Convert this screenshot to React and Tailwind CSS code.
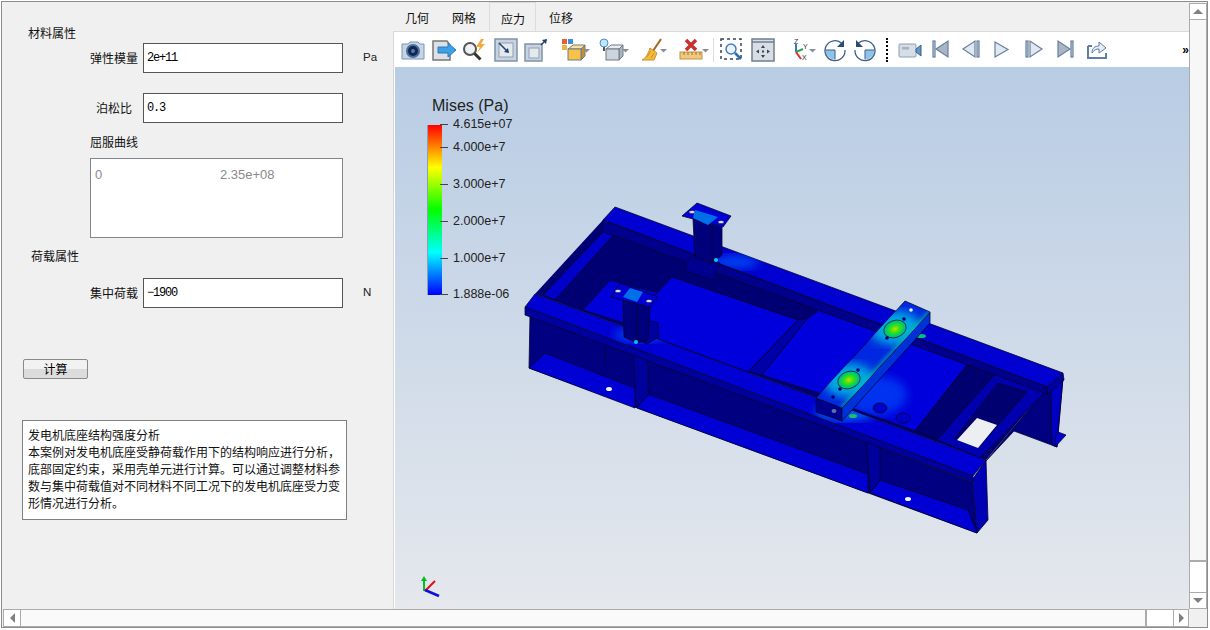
const cjk = "font-['Noto_Sans_CJK_SC','Liberation_Sans',sans-serif]";

function Svg({ w = 24, className = "", children }) {
  return (
    <svg width={w} height="24" viewBox={`0 0 ${w} 24`} className={"shrink-0 " + className}>
      {children}
    </svg>
  );
}

const Caret = ({ x }) => <path d={`M${x} 11h7l-3.500 3.500z`} fill="#8a8f96" />;

const Cube = ({ top, side, front }) => (
  <g stroke="#6f7a86" strokeWidth="1">
    <path d="M7 11h13l4-4H12z" fill={top} />
    <path d="M20 11l4-4v11l-4 4z" fill={side} />
    <rect x="7" y="11" width="13" height="11" fill={front} />
  </g>
);

const BoxFrame = () => (
  <g>
    <rect x="1" y="1" width="22" height="22" fill="#c9d3de" stroke="#7f93ab" strokeWidth="1.500" />
    <rect x="5" y="5" width="14" height="14" fill="#e4e9ee" stroke="#8ea0b5" />
  </g>
);

const Camera = (p) => (
  <Svg {...p}>
    <path d="M1 6h6l2-2h8l2 2h4v15H1z" fill="#c6d4e4" stroke="#7b94b3" />
    <circle cx="12" cy="13" r="7" fill="#4a6f9c" />
    <circle cx="12" cy="13" r="5" fill="#14274a" />
    <circle cx="12" cy="13" r="2" fill="#4f7cc0" />
  </Svg>
);

const Export = (p) => (
  <Svg {...p}>
    <path d="M1 3h14l3 4v15H1z" fill="#dde1e6" stroke="#777" strokeWidth="1.500" />
    <path d="M6 9h10V5l8 7-8 7v-4H6z" fill="#3ea0e6" stroke="#2a78b8" />
  </Svg>
);

const Bolt = (p) => (
  <Svg {...p}>
    <circle cx="8" cy="11" r="6" fill="#eef2f6" stroke="#555" strokeWidth="2" />
    <path d="M12.500 15.500l6 6" stroke="#333" strokeWidth="3" />
    <path d="M19 1l-5 8h4l-3 6 8-9h-4l3-5z" fill="#f2a93b" />
  </Svg>
);

const BoxIn = (p) => (
  <Svg {...p}>
    <BoxFrame />
    <path d="M5 5l9 9" stroke="#1f3f6e" strokeWidth="1.500" />
    <path d="M15 15l-5-1 4-4z" fill="#1f3f6e" />
  </Svg>
);

const BoxOut = (p) => (
  <Svg {...p}>
    <rect x="1" y="6" width="17" height="17" fill="#c9d3de" stroke="#7f93ab" strokeWidth="1.500" />
    <rect x="5" y="10" width="10" height="10" fill="#e4e9ee" stroke="#8ea0b5" />
    <path d="M17 7l5-5" stroke="#1f3f6e" strokeWidth="1.500" />
    <path d="M23 1l-1 5-4-4z" fill="#1f3f6e" />
  </Svg>
);

const ColorCube = (p) => (
  <Svg w={30} {...p}>
    <rect x="1" y="1" width="5" height="5" fill="#e2603c" />
    <rect x="7" y="1" width="5" height="5" fill="#3f8ed8" />
    <rect x="1" y="7" width="5" height="5" fill="#f0b040" />
    <Cube top="#f7e2a0" side="#c98f2c" front="#f6c24a" />
    <Caret x={22} />
  </Svg>
);

const BulbCube = (p) => (
  <Svg w={30} {...p}>
    <Cube top="#e8edf2" side="#aab4bf" front="#ccd4dc" />
    <circle cx="5" cy="5" r="4" fill="#bfe6fa" stroke="#4b8fc4" />
    <path d="M4 9h2v4H4z" fill="#555" />
    <Caret x={23} />
  </Svg>
);

const Broom = (p) => (
  <Svg w={28} {...p}>
    <path d="M20 1l-8 12" stroke="#a5641e" strokeWidth="2" />
    <path d="M9 10l7 5-3 7-12 0c4-2 6-6 8-12z" fill="#f4bc3c" stroke="#c98f2c" />
    <path d="M6 19l4-6M10 20l3-5" stroke="#c98f2c" />
    <Caret x={19} />
  </Svg>
);

const Ruler = (p) => (
  <Svg w={30} {...p}>
    <path d="M7 2l10 10M17 2L7 12" stroke="#c8312f" strokeWidth="3.500" />
    <rect x="1" y="14" width="22" height="7" fill="#f0c980" stroke="#bf9444" />
    <path d="M5 14v3M9 14v3M13 14v3M17 14v3M21 14v3" stroke="#9a7430" />
    <Caret x={23} />
  </Svg>
);

const DashZoom = (p) => (
  <Svg {...p}>
    <rect x="1" y="1" width="20" height="20" fill="none" stroke="#33415c" strokeWidth="1.500" strokeDasharray="3 3" />
    <circle cx="11" cy="11" r="5" fill="#eef3f8" stroke="#3f7fbe" strokeWidth="1.500" />
    <path d="M15 15l6 6" stroke="#2e6fb0" strokeWidth="2.500" />
  </Svg>
);

const Fit = (p) => (
  <Svg {...p}>
    <rect x="1" y="1" width="22" height="22" fill="#d9dee5" stroke="#6f7f94" strokeWidth="1.500" />
    <path d="M1 4h22" stroke="#6f7f94" strokeWidth="1.500" />
    <g fill="#3a4454">
      <path d="M12 7l2 3h-4zM12 20l2-3h-4zM5 13.500l3-2v4zM19 13.500l-3-2v4z" />
      <rect x="11" y="12.500" width="2" height="2" />
    </g>
  </Svg>
);

const Axes = (p) => (
  <Svg w={26} {...p}>
    <path d="M6 14V6" stroke="#3a78c4" strokeWidth="2" />
    <path d="M6 14l7-3" stroke="#2fa84f" strokeWidth="2" />
    <path d="M6 14l5 7" stroke="#d8322f" strokeWidth="2" />
    <text x="4" y="6" fontSize="7" fontFamily="Liberation Sans" fill="#333">Z</text>
    <text x="13" y="11" fontSize="7" fontFamily="Liberation Sans" fill="#333">Y</text>
    <text x="12" y="22" fontSize="7" fontFamily="Liberation Sans" fill="#333">X</text>
    <Caret x={19} />
  </Svg>
);

const Rotate = ({ flip, ...p }) => (
  <Svg {...p}>
    <g transform={flip ? "translate(24 0) scale(-1 1)" : undefined}>
      <path d="M12 12H2.500a9.500 9.500 0 0 0 9.500 9.500z" fill="#8cc4ea" />
      <path d="M12 12v9.500M12 12H2.500" stroke="#3d5f88" />
      <path d="M19 5.500A10 10 0 1 0 22 12" fill="none" stroke="#3d5f88" strokeWidth="1.300" />
      <path d="M21 2v7h-7z" fill="#2c4a72" />
    </g>
  </Svg>
);

const Video = (p) => (
  <Svg {...p}>
    <rect x="1" y="6" width="17" height="13" rx="1" fill="#d5dde6" stroke="#8ea0b5" />
    <rect x="4" y="9" width="7" height="2.500" fill="#a8b2bd" />
    <path d="M18 11l5-4v11l-5-4z" fill="#5f98c8" stroke="#3d5f88" />
  </Svg>
);

const tri = { fill: "#c9d4e0", stroke: "#667f9f", strokeWidth: 1.2 };
const First = (p) => (
  <Svg w={20} {...p}>
    <rect x="2" y="3" width="2" height="16" {...tri} />
    <path d="M17 3v16L5 11z" {...tri} fill="#a9b5c2" />
  </Svg>
);
const Prev = (p) => (
  <Svg w={20} {...p}>
    <path d="M14 3v16L2 11z" {...tri} fill="#e1e8f0" />
    <rect x="16" y="3" width="2" height="16" {...tri} />
  </Svg>
);
const Play = (p) => (
  <Svg w={20} {...p}>
    <path d="M3 4v15l13-7.500z" {...tri} fill="#e1e8f0" />
  </Svg>
);
const Next = (p) => (
  <Svg w={20} {...p}>
    <rect x="2" y="3" width="2" height="16" {...tri} />
    <path d="M6 3v16l12-8z" {...tri} fill="#e1e8f0" />
  </Svg>
);
const Last = (p) => (
  <Svg w={20} {...p}>
    <path d="M3 3v16l12-8z" {...tri} fill="#a9b5c2" />
    <rect x="16" y="3" width="2" height="16" {...tri} />
  </Svg>
);
const Share = (p) => (
  <Svg {...p}>
    <path d="M3 8h4M3 8v12h18v-5" fill="none" stroke="#5d7fa8" strokeWidth="2" />
    <path d="M7 15c0-5 3-7 7-7V4l7 6-7 5v-4c-3 0-5 1-7 4z" fill="#e6edf5" stroke="#5d7fa8" />
  </Svg>
);

function Toolbar() {
  return (
    <div className="h-[35px] shrink-0 bg-white flex items-center overflow-hidden pl-[6px]">
      <Camera />
      <Export className="ml-[7px]" />
      <Bolt className="ml-[6px]" />
      <BoxIn className="ml-[8px]" />
      <BoxOut className="ml-[6px]" />
      <ColorCube className="ml-[13px]" />
      <BulbCube className="ml-[8px]" />
      <Broom className="ml-[12px]" />
      <Ruler className="ml-[10px]" />
      <div className="ml-[4px] w-px h-[24px] bg-[#dcdcdc]" />
      <DashZoom className="ml-[6px]" />
      <Fit className="ml-[7px]" />
      <Axes className="ml-[15px]" />
      <Rotate className="ml-[7px]" />
      <Rotate flip className="ml-[6px]" />
      <div className="ml-[9px] w-[3px] h-[24px] border-l-[2px] border-dotted border-black" />
      <Video className="ml-[9px]" />
      <First className="ml-[9px]" />
      <Prev className="ml-[10px]" />
      <Play className="ml-[11px]" />
      <Next className="ml-[12px]" />
      <Last className="ml-[11px]" />
      <Share className="ml-[10px]" />
      <span className="ml-auto text-[12px] leading-none font-bold text-black font-['Liberation_Sans',sans-serif]">»</span>
    </div>
  );
}

function Legend() {
  const labels = ["4.615e+07", "4.000e+7", "3.000e+7", "2.000e+7", "1.000e+7", "1.888e-06"];
  const spacing = ["mt-0", "mt-[8px]", "mt-[22px]", "mt-[22px]", "mt-[22px]", "mt-[21px]"];
  return (
    <div className="absolute left-[32px] top-[30px] text-[#222] font-['Liberation_Sans',sans-serif]">
      <div className="pl-[5px] text-[16px] leading-[18px]">Mises (Pa)</div>
      <div className="mt-[10px] flex">
        <div className="w-[15px] h-[170px] bg-[linear-gradient(to_bottom,#ff0000,#ffff00_25%,#00ff00_50%,#00ffff_75%,#0000ff)] border-l border-[#8aa0b8]" />
        <div className="-mt-[8px] flex flex-col">
          {labels.map((t, i) => (
            <div key={t} className={"flex items-center h-[15px] " + spacing[i]}>
              <span className="w-[8px] h-px bg-[#444] -ml-[2px]" />
              <span className="ml-[5px] text-[12.5px] leading-[15px]">{t}</span>
            </div>
          ))}
        </div>
      </div>
    </div>
  );
}

function Model() {
  const line = { stroke: "#050530", strokeWidth: 0.8, strokeLinejoin: "round" };
  return (
    <svg className="absolute inset-0 w-full h-full" viewBox="395 67 794 542">
      <defs>
        <filter id="b2"><feGaussianBlur stdDeviation="2" /></filter>
        <filter id="b5"><feGaussianBlur stdDeviation="5" /></filter>
        <filter id="b1"><feGaussianBlur stdDeviation="0.7" /></filter>
        <radialGradient id="hot">
          <stop offset="0" stopColor="#b8e400" />
          <stop offset="0.4" stopColor="#40e010" />
          <stop offset="0.75" stopColor="#00d060" />
          <stop offset="1" stopColor="#00b0a0" />
        </radialGradient>
        <clipPath id="beamTop"><path d="M905 301l25 11-88 96-26-10z" /></clipPath>
        <clipPath id="railTop"><path d="M535 294L986 460 973 476 525 307z" /></clipPath>
        <clipPath id="farTop"><path d="M603 220l12-13 448 166-16 14z" /></clipPath>
        <clipPath id="plateR"><path d="M905 337l65 24-55 70-65-24z" /></clipPath>
      </defs>

      {/* far end web */}
      <path d="M1047 387l16-9-6 69-43-16-29 31z" fill="#000080" {...line} />
      <path d="M1051 390l12-12-5 54-1 15-5-2z" fill="#0000c4" {...line} />
      <path d="M1055 447l11-12-8-3-3 6z" fill="#0000d0" {...line} />

      {/* interior */}
      <path d="M603 220L1047 387 986 460 535 294z" fill="#000072" />
      <path d="M603 232l14-1-62 69-12-5z" fill="#0000c8" {...line} />
      <path d="M583 310l27-30 48 13-28 32z" fill="#0000d8" {...line} />
      <path d="M672 277l126 43-50 52-123-45z" fill="#0000dc" {...line} />
      <path d="M798 320l10-2-46 57-14-3z" fill="#0000a8" {...line} />
      <path d="M808 318l15-11 62 23-60 65-63-20z" fill="#0000dc" {...line} />
      <path d="M905 337l65 24-55 70-65-24z" fill="#0000dc" {...line} />
      <g clipPath="url(#plateR)">
        <ellipse cx="875" cy="395" rx="32" ry="20" fill="#0030f0" filter="url(#b5)" />
      </g>
      <ellipse cx="880" cy="408" rx="7" ry="5" fill="#0000c8" {...line} />
      <ellipse cx="903" cy="418" rx="7" ry="5" fill="#0000c8" {...line} />
      <path d="M970 361l27 11-57 68-25-9z" fill="#000070" {...line} />
      <path d="M997 372l50 18-67 68-43-18z" fill="#0000b0" {...line} />
      <path d="M998 383l29 9-49 56-23-10z" fill="#000070" {...line} />
      <path d="M977 418l20 7-19 23-21-8z" fill="#eceef1" />

      {/* far rail */}
      <path d="M603 220l12-13 448 166-16 14z" fill="#0000d0" {...line} />
      <g clipPath="url(#farTop)">
        <ellipse cx="735" cy="262" rx="24" ry="7" fill="#0040f0" filter="url(#b5)" />
      </g>
      <path d="M603 220v12l12 4 432 158v-7z" fill="#00008c" {...line} />
      <path d="M1047 387l16-14 1 7-16 14z" fill="#0000a0" {...line} />

      {/* far stand */}
      <path d="M693 255l27 8-7 17-27-9v-9z" fill="#000090" {...line} />
      <path d="M693 219l29 8v28l-10 8-17-5z" fill="#00007c" {...line} />
      <path d="M712 225v38" {...line} />
      <path d="M697 203l34 13-8 11-41-11z" fill="#0000d4" {...line} />
      <path d="M695 210l23 7-10 8-15-7z" fill="#0070e8" filter="url(#b1)" />
      <ellipse cx="692" cy="212" rx="3" ry="1.500" fill="#e0e6ee" stroke="#000050" strokeWidth="0.5" />
      <ellipse cx="721" cy="222" rx="3" ry="1.500" fill="#e0e6ee" stroke="#000050" strokeWidth="0.5" />
      <circle cx="716" cy="260" r="2" fill="#00c8f0" filter="url(#b1)" />

      {/* near rail */}
      <path d="M530 315L972 482 977 533 529 368z" fill="#000080" {...line} />
      <path d="M972 480l14-20 2 60-11 13z" fill="#0000b4" {...line} />
      <path d="M529 368l16-15 90 35v20z" fill="#0000d4" {...line} />
      <path d="M648 394l220 80v19l-231-85z" fill="#0000d4" {...line} />
      <path d="M880 480l88 30 9 23-107-40z" fill="#0000d4" {...line} />
      <path d="M633 346l3 62 12-13v-46z" fill="#00009c" {...line} />
      <path d="M866 432l4 61 10-13v-44z" fill="#00009c" {...line} />
      <path d="M605 335v30M605 335l30 11" {...line} />
      <ellipse cx="609" cy="389" rx="3" ry="2" fill="#f0f2f4" />
      <ellipse cx="908" cy="499" rx="3" ry="2" fill="#f0f2f4" />
      <path d="M535 294L986 460 973 476 525 307z" fill="#0000d4" {...line} />
      <g clipPath="url(#railTop)">
        <ellipse cx="640" cy="335" rx="26" ry="7" fill="#0040f0" filter="url(#b5)" />
        <ellipse cx="845" cy="412" rx="30" ry="9" fill="#0060f0" filter="url(#b5)" />
      </g>
      <path d="M525 307l448 169v6L525 315z" fill="#0000a0" {...line} />

      {/* near stand */}
      <path d="M640 318l18 5 1 14-12 7-10-4z" fill="#0000a0" {...line} />
      <path d="M623 300l27 7-2 33-11 3-13-6z" fill="#00007c" {...line} />
      <path d="M637 305v38" {...line} />
      <path d="M620 283l38 14-8 10-39-10z" fill="#0000d4" {...line} />
      <path d="M630 288l13 4-6 10-14-5z" fill="#0070e8" filter="url(#b1)" />
      <ellipse cx="618" cy="291" rx="3" ry="1.500" fill="#e0e6ee" stroke="#000050" strokeWidth="0.5" />
      <ellipse cx="649" cy="301" rx="3" ry="1.500" fill="#e0e6ee" stroke="#000050" strokeWidth="0.5" />
      <circle cx="636" cy="342" r="2" fill="#00c8f0" filter="url(#b1)" />

      {/* cross beam */}
      <ellipse cx="921" cy="336" rx="5" ry="2" fill="#00c080" filter="url(#b1)" />
      <ellipse cx="853" cy="416" rx="4" ry="2" fill="#20c060" filter="url(#b1)" />
      <path d="M816 398l26 10v13l-26-9z" fill="#000090" {...line} />
      <path d="M930 312v11l-78 87-10 11v-13z" fill="#0030d8" {...line} />
      <path d="M905 301l25 11-88 96-26-10z" fill="#0028e0" {...line} />
      <g clipPath="url(#beamTop)">
        <ellipse cx="895" cy="328" rx="26" ry="17" fill="#00a8e0" filter="url(#b5)" />
        <ellipse cx="849" cy="380" rx="26" ry="17" fill="#00a8e0" filter="url(#b5)" />
        <path d="M930 312l-88 96" stroke="#00c8a0" strokeWidth="3" filter="url(#b2)" />
      </g>
      <ellipse cx="895" cy="329" rx="11.500" ry="8.500" fill="url(#hot)" stroke="#053030" strokeWidth="0.8" transform="rotate(-20 895 329)" />
      <ellipse cx="849" cy="380" rx="11.500" ry="8.500" fill="url(#hot)" stroke="#053030" strokeWidth="0.8" transform="rotate(-20 849 380)" />
      <circle cx="911" cy="310" r="1.800" fill="#e8eef2" />
      <circle cx="904" cy="319" r="1.800" fill="#000070" />
      <circle cx="887" cy="338" r="1.800" fill="#000070" />
      <circle cx="858" cy="370" r="1.800" fill="#000070" />
      <circle cx="840" cy="389" r="1.800" fill="#000070" />
      <circle cx="833" cy="397" r="1.800" fill="#000070" />
      <ellipse cx="834" cy="411" rx="2.500" ry="2" fill="#6070a0" />

      {/* axes */}
      <g filter="url(#b1)">
        <path d="M424 591v-13" stroke="#00c020" strokeWidth="2" />
        <path d="M424 576l-3 5h6z" fill="#00c020" />
        <path d="M425 591l10-10" stroke="#e01010" strokeWidth="2" />
        <path d="M425 590l14 6" stroke="#1010e0" strokeWidth="2.500" />
      </g>
    </svg>
  );
}

function Field({ label, value, unit }) {
  return (
    <div className="flex items-center h-[30px] pl-[88px]">
      <span className="w-[48px] text-center text-[12px] leading-[16px] text-[#111]">{label}</span>
      <div className="ml-[5px] w-[200px] h-full bg-white border border-[#555] pl-[3px] flex items-center text-[12px] tracking-[-1.2px] text-black font-['Liberation_Mono',monospace]">
        {value}
      </div>
      {unit && <span className="ml-[20px] text-[11.5px] text-[#222] font-['Liberation_Sans',sans-serif]">{unit}</span>}
    </div>
  );
}

function LeftPanel() {
  return (
    <div className={"w-[391px] shrink-0 flex flex-col pt-[23px] " + cjk}>
      <div className="pl-[26px] text-[12px] leading-[16px] text-[#111]">材料属性</div>
      <div className="mt-[2px]">
        <Field label="弹性模量" value="2e+11" unit="Pa" />
      </div>
      <div className="mt-[20px]">
        <Field label="泊松比" value="0.3" />
      </div>
      <div className="mt-[11px] pl-[88px] text-[12px] leading-[16px] text-[#111]">屈服曲线</div>
      <div className="mt-[8px] ml-[88px] w-[253px] h-[80px] bg-white border border-[#80868c] flex pt-[8px] pl-[4px] text-[13px] leading-[15px] text-[#8a8a8a] font-['Liberation_Sans',sans-serif]">
        <span className="w-[125px]">0</span>
        <span>2.35e+08</span>
      </div>
      <div className="mt-[10px] pl-[29px] text-[12px] leading-[16px] text-[#111]">荷载属性</div>
      <div className="mt-[14px]">
        <Field label="集中荷载" value="−1900" unit="N" />
      </div>
      <button
        type="button"
        className="mt-[51px] ml-[21px] w-[65px] h-[20px] rounded-[2px] border border-[#8a8a8a] bg-[linear-gradient(to_bottom,#f2f2f2_50%,#dcdcdc_50%)] text-[12px] leading-[16px] text-black"
      >
        计算
      </button>
      <div className="mt-[41px] ml-[20px] w-[325px] h-[100px] bg-white border border-[#808080] px-[5px] pt-[5px] text-[12px] leading-[17px] text-[#111]">
        发电机底座结构强度分析
        <br />
        本案例对发电机底座受静荷载作用下的结构响应进行分析，底部固定约束，采用壳单元进行计算。可以通过调整材料参数与集中荷载值对不同材料不同工况下的发电机底座受力变形情况进行分析。
      </div>
    </div>
  );
}

function Tabs() {
  return (
    <div className={"h-[30px] shrink-0 flex items-end border-b border-[#dadada] text-[12px] text-[#111] " + cjk}>
      <div className="w-[47px] pl-[12px] h-[28px] leading-[30px]">几何</div>
      <div className="w-[49px] pl-[12px] h-[28px] leading-[30px]">网格</div>
      <div className="w-[47px] pl-[11px] h-[29px] leading-[31px] border border-b-0 border-[#dcdcdc]">应力</div>
      <div className="w-[48px] pl-[13px] h-[28px] leading-[30px]">位移</div>
    </div>
  );
}

function ScrollBtn({ className = "", children }) {
  return (
    <div className={"shrink-0 bg-white border border-[#ababab] flex items-center justify-center " + className}>
      {children}
    </div>
  );
}

function VScroll() {
  return (
    <div className="w-[18px] shrink-0 flex flex-col pt-px">
      <ScrollBtn className="h-[17px]">
        <span className="w-0 h-0 border-x-[5px] border-x-transparent border-b-[5px] border-b-[#808080]" />
      </ScrollBtn>
      <div className="flex-1 bg-[#f7f7f7] border-x border-b-2 border-[#ababab]" />
      <div className="h-[30px] shrink-0 bg-white border-x border-[#ababab]" />
      <ScrollBtn className="h-[17px]">
        <span className="w-0 h-0 border-x-[5px] border-x-transparent border-t-[5px] border-t-[#808080]" />
      </ScrollBtn>
    </div>
  );
}

function HScroll() {
  return (
    <div className="h-[18px] shrink-0 flex pl-px">
      <ScrollBtn className="w-[18px]">
        <span className="w-0 h-0 border-y-[5px] border-y-transparent border-r-[5px] border-r-[#808080]" />
      </ScrollBtn>
      <div className="flex-1 bg-[#fafafa] border-y border-r-2 border-[#ababab]" />
      <div className="w-[26px] shrink-0 bg-white border-y border-[#ababab]" />
      <ScrollBtn className="w-[16px]">
        <span className="w-0 h-0 border-y-[5px] border-y-transparent border-l-[5px] border-l-[#808080]" />
      </ScrollBtn>
      <div className="w-[18px] shrink-0 bg-[#f0f0f0]" />
    </div>
  );
}

export default function App() {
  return (
    <div className="w-[1210px] h-[630px] bg-white pl-px pt-px overflow-hidden">
      <div className="w-[1207px] h-[627px] border border-[#8c8c8c] bg-[#f0f0f0] flex flex-col">
        <div className="flex-1 min-h-0 flex">
          <LeftPanel />
          <div className="flex-1 min-w-0 flex flex-col">
            <Tabs />
            <div className="flex-1 min-h-0 flex flex-col border-l border-[#d8d8d8] pl-px bg-white">
              <Toolbar />
              <div className="relative flex-1 min-h-0 overflow-hidden bg-[linear-gradient(to_bottom,#b8cce4,#e5e8ed)]">
                <Model />
                <Legend />
              </div>
            </div>
          </div>
          <VScroll />
        </div>
        <HScroll />
      </div>
    </div>
  );
}
